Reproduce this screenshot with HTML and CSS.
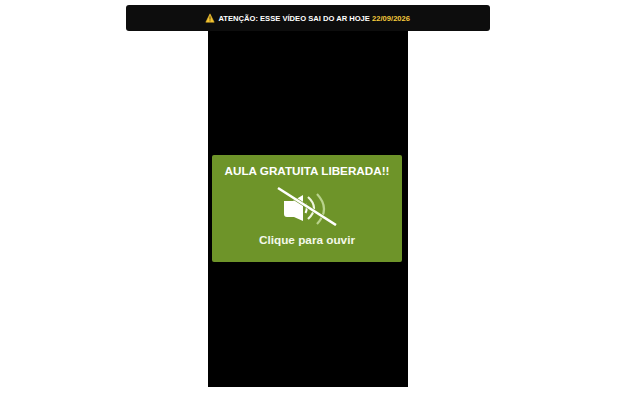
FILE: index.html
```html
<!DOCTYPE html>
<html lang="pt-BR">
<head>
<meta charset="utf-8">
<title>Aula gratuita</title>
<link rel="stylesheet" href="styles.css">
</head>
<body>
<main class="page">
  <div class="banner">
    <svg class="warn" viewBox="0 0 10 10" width="10" height="10" aria-hidden="true">
      <path d="M5 .8 9.2 9.2H.8Z" fill="#f2c230" stroke="#f2c230" stroke-width=".5" stroke-linejoin="round"/>
      <path d="M5 3.4V6.6M5 7.4V8.3" stroke="#4a3a10" stroke-width="1"/>
    </svg>
    <span>ATENÇÃO: ESSE VÍDEO SAI DO AR HOJE <em class="date">22/09/2026</em></span>
  </div>
  <div class="video">
    <div class="card">
      <div class="title">AULA GRATUITA LIBERADA!!</div>
      <svg class="mute" viewBox="0 0 60 40" width="60" height="40" aria-hidden="true">
        <path d="M7 15H16L26 9V35L17 31H10Q7 31 7 28Z" fill="#fff"/>
        <path d="M28.5 18Q31 22 28.5 27" class="w1"/>
        <path d="M31 11Q43 22 31 33" class="w2"/>
        <path d="M40 8Q54 23 40 38" class="w3"/>
        <path d="M1 2 59 39" class="gap"/>
        <path d="M1 2 59 39" class="slash"/>
      </svg>
      <div class="sub">Clique para ouvir</div>
    </div>
  </div>
</main>
</body>
</html>
```
FILE: styles.css
```css
html, body { margin: 0; padding: 0; background: #fff; }
body { height: 400px; overflow: hidden; font-family: "Liberation Sans", Arial, sans-serif; }
.page { display: flex; flex-direction: column; align-items: center; padding: 5px 24px 0 0; }
.banner {
  width: 364px; height: 26px; box-sizing: border-box;
  display: flex; align-items: center; justify-content: center; gap: 3.5px;
  background: #0d0d0d; border-radius: 3px;
  color: #fff; font-size: 7.6px; font-weight: 700;
  padding-right: 1px;
}
.warn { flex: none; }
.date { color: #f5cb3c; font-style: normal; }
.video {
  width: 200px; height: 356px; background: #000;
  display: flex; align-items: center; box-sizing: border-box;
  padding: 0 6px 2px 4px;
}
.card {
  flex: 1; height: 107px; box-sizing: border-box;
  background: #6e9429; border-radius: 2px;
  display: flex; flex-direction: column; align-items: center;
  color: #fff; font-weight: 700; padding-top: 9px;
}
.title { font-size: 11.7px; line-height: 14px; white-space: nowrap; }
.mute { display: block; margin-top: 8px; }
.w1, .w2, .w3, .gap, .slash { fill: none; }
.w1 { stroke: #fff; stroke-width: 2; }
.w2 { stroke: #eef5df; stroke-width: 2.2; }
.w3 { stroke: #b9d38c; stroke-width: 2.2; }
.gap { stroke: #6e9429; stroke-width: 3.6; }
.slash { stroke: #fff; stroke-width: 2.6; }
.sub { font-size: 11.75px; line-height: 14px; margin-top: 7px; color: #f4f8ea; }
```
